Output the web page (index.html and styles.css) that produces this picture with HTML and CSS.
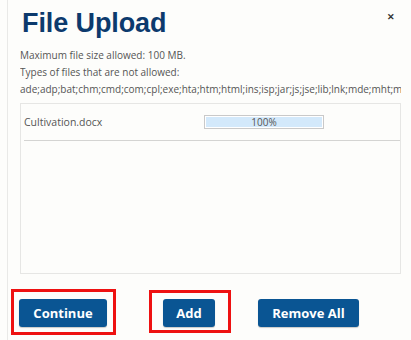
FILE: index.html
```html
<!DOCTYPE html>
<html>
<head>
<meta charset="utf-8">
<link rel="stylesheet" href="styles.css">
</head>
<body>
<div class="dialog">
  <div class="header">
    <h1 class="title">File Upload</h1>
    <span class="close">&#x2715;</span>
  </div>
  <div class="info">
    <p>Maximum file size allowed: 100 MB.</p>
    <p>Types of files that are not allowed:</p>
    <p class="types">ade;adp;bat;chm;cmd;com;cpl;exe;hta;htm;html;ins;isp;jar;js;jse;lib;lnk;mde;mht;mhtml;msc;msp;mst;php;pif;scr;sct;shb;sys;vb;vbe;vbs;vxd;wsc;wsf;wsh</p>
  </div>
  <div class="filebox">
    <div class="filerow">
      <span class="filename">Cultivation.docx</span>
      <div class="progress"><div class="fill" style="width:100%"></div><span class="pct">100%</span></div>
    </div>
  </div>
  <div class="actions">
    <div class="mark mark-continue"><button class="btn">Continue</button></div>
    <div class="mark mark-add"><button class="btn btn-add">Add</button></div>
    <button class="btn btn-remove">Remove All</button>
  </div>
</div>
</body>
</html>
```
FILE: styles.css
```css
html, body {
  margin: 0;
  padding: 0;
  background: #fdfdfb;
  overflow: hidden;
}
body {
  width: 411px;
  height: 340px;
  font-family: "Open Sans", "Liberation Sans", sans-serif;
}
.dialog {
  margin-left: 7px;
  border-left: 1px solid #e9e9e7;
  height: 340px;
  padding-left: 12px;
  box-sizing: border-box;
}
.header {
  display: flex;
  justify-content: space-between;
  align-items: flex-start;
  padding-top: 8px;
  padding-right: 16px;
}
.title {
  margin: 0 0 0 2px;
  font-family: "Liberation Sans", Arial, sans-serif;
  font-weight: 700;
  font-size: 27px;
  line-height: 31px;
  color: #0c3a6d;
  letter-spacing: -0.1px;
}
.close {
  font-size: 9px;
  font-weight: 700;
  color: #333;
  margin-top: 2px;
}
.info {
  margin-top: 8px;
  margin-right: 10px;
  font-size: 10px;
  color: #555;
  line-height: 17px;
  overflow: hidden;
}
.info p {
  margin: 0;
  white-space: nowrap;
}
.filebox {
  margin-top: 5px;
  margin-right: 10px;
  height: 171px;
  border: 1px solid #e6e6e4;
  box-sizing: border-box;
  padding: 0 0 0 3px;
  overflow: hidden;
}
.filerow {
  display: flex;
  align-items: center;
  height: 36px;
  border-bottom: 1px solid #d4d4d2;
}
.filename {
  font-size: 10.5px;
  color: #555;
  width: 180px;
}
.progress {
  position: relative;
  width: 120px;
  height: 14px;
  border: 1px solid #c9c9c9;
  box-sizing: border-box;
  background: #fff;
  padding: 1px;
}
.fill {
  height: 100%;
  background: #d3e9fb;
}
.pct {
  position: absolute;
  left: 0;
  right: 0;
  top: 0;
  text-align: center;
  font-size: 10px;
  line-height: 12px;
  color: #555;
}
.actions {
  display: flex;
  align-items: flex-start;
  margin-top: 15px;
  margin-left: -9px;
}
.mark {
  border: 3px solid #ee1111;
}
.mark-continue {
  padding: 7px 6px 5px 5px;
}
.mark-add {
  margin-left: 33px;
  margin-top: 1px;
  padding: 6px 13px 3px 11px;
}
.btn {
  display: block;
  background: #0a5593;
  color: #fff;
  border: none;
  border-radius: 3px;
  font-family: "Open Sans", "Liberation Sans", sans-serif;
  font-weight: 700;
  font-size: 13px;
  height: 28px;
  width: 88px;
  padding: 0;
  box-shadow: 0 1px 1px rgba(0,0,0,0.2);
}
.btn-add {
  width: 52px;
}
.btn-remove {
  width: 101px;
  margin-left: 27px;
  margin-top: 10px;
}
```
